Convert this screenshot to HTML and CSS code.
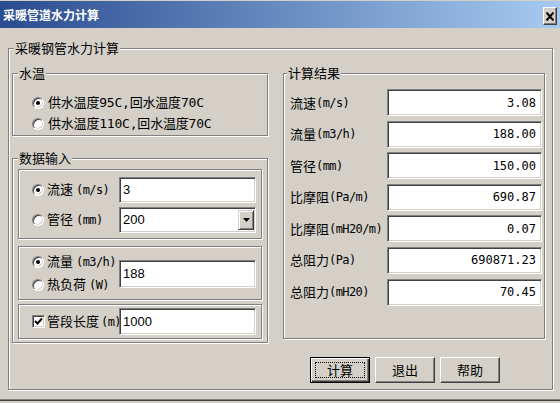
FILE: index.html
```html
<!DOCTYPE html>
<html lang="zh-CN">
<head>
<meta charset="utf-8">
<title>采暖管道水力计算</title>
<link rel="stylesheet" href="styles.css">
</head>
<body>
<div class="window">
  <div class="titlebar">
    <span class="title">采暖管道水力计算</span>
    <span class="close"><svg width="8" height="9" viewBox="0 0 8 9"><path d="M0.5 0.5 L7.5 8.5 M7.5 0.5 L0.5 8.5" stroke="#000" stroke-width="2" fill="none"/></svg></span>
  </div>
  <fieldset class="group outer">
    <legend>采暖钢管水力计算</legend>
    <div class="outer-body">
      <div class="columns">
        <div class="leftcol">
          <fieldset class="group temp">
            <legend>水温</legend>
            <div class="temp-body">
              <div class="opt"><span class="radio on"></span>供水温度95C,回水温度70C</div>
              <div class="opt"><span class="radio"></span>供水温度110C,回水温度70C</div>
            </div>
          </fieldset>
          <fieldset class="group datain">
            <legend>数据输入</legend>
            <div class="datain-body">
              <div class="box box1">
                <div class="opt lbl"><span class="radio on"></span>流速<span class="a">(m/s)</span></div>
                <div class="field"><span>3</span></div>
                <div class="opt lbl"><span class="radio"></span>管径<span class="a">(mm)</span></div>
                <div class="field combo"><span>200</span><span class="drop"><svg width="7" height="4" viewBox="0 0 7 4"><polygon points="0,0 7,0 3.5,4" fill="#000"/></svg></span></div>
              </div>
              <div class="box box2">
                <div class="opt lbl r1"><span class="radio on"></span>流量<span class="a">(m3/h)</span></div>
                <div class="opt lbl r2"><span class="radio"></span>热负荷<span class="a">(W)</span></div>
                <div class="field tall"><span>188</span></div>
              </div>
              <div class="box box3">
                <div class="opt lbl chk"><span class="check"><svg width="9" height="9" viewBox="0 0 9 9"><polyline points="1,4 3.5,6.5 8,1.5" stroke="#000" stroke-width="2" fill="none"/></svg></span>管段长度<span class="a">(m)</span></div>
                <div class="field"><span>1000</span></div>
              </div>
            </div>
          </fieldset>
        </div>
        <fieldset class="group result">
          <legend>计算结果</legend>
          <div class="result-body">
            <div class="rlabel">流速<span class="a">(m/s)</span></div>
            <div class="field val">3.08</div>
            <div class="rlabel">流量<span class="a">(m3/h)</span></div>
            <div class="field val">188.00</div>
            <div class="rlabel">管径<span class="a">(mm)</span></div>
            <div class="field val">150.00</div>
            <div class="rlabel">比摩阻<span class="a">(Pa/m)</span></div>
            <div class="field val">690.87</div>
            <div class="rlabel">比摩阻<span class="a">(mH20/m)</span></div>
            <div class="field val">0.07</div>
            <div class="rlabel">总阻力<span class="a">(Pa)</span></div>
            <div class="field val">690871.23</div>
            <div class="rlabel">总阻力<span class="a">(mH20)</span></div>
            <div class="field val">70.45</div>
          </div>
        </fieldset>
      </div>
      <div class="buttons">
        <div class="btn default"><span>计算</span></div>
        <div class="btn"><span>退出</span></div>
        <div class="btn"><span>帮助</span></div>
      </div>
    </div>
  </fieldset>
</div>
</body>
</html>
```
FILE: styles.css
```css
* { box-sizing: border-box; }
html, body { margin: 0; padding: 0; }
body {
  width: 560px;
  height: 403px;
  overflow: hidden;
  background: #d4d0c8;
  font-family: "Noto Sans CJK SC", sans-serif;
  font-size: 13px;
  color: #000;
}
.window {
  height: 400px;
  padding-top: 1px;
  border-bottom: 1px solid #808080;
  box-shadow: 0 1px 0 #404040;
}
.titlebar {
  height: 27px;
  display: flex;
  align-items: center;
  justify-content: space-between;
  padding: 0 3px;
  background: linear-gradient(to right, #2a4c90, #a6caf0);
}
.title {
  color: #fff;
  font-weight: bold;
  font-size: 12px;
  line-height: 16px;
}
.close {
  width: 14px;
  height: 18px;
  margin-top: 3px;
  background: #d4d0c8;
  border: 1px solid;
  border-color: #fff #404040 #404040 #fff;
  box-shadow: inset -1px -1px 0 #808080;
  display: flex;
  align-items: center;
  justify-content: center;
}
.close svg { display: block; }

.group {
  margin: 0;
  padding: 0;
  min-width: 0;
  border: 1px solid #808080;
  box-shadow: inset 1px 1px 0 #fff, 1px 1px 0 #fff;
}
.group > legend {
  padding: 0 1px;
  margin-left: 5px;
  font-size: 13px;
  line-height: 18px;
  background: #d4d0c8;
}
.outer {
  margin: 11px 0 0 8px;
  width: 545px;
}
.outer-body { padding: 7px 7px 6px 3px; }
.columns {
  display: flex;
  align-items: flex-start;
  gap: 15px;
}
.leftcol {
  width: 256px;
  display: flex;
  flex-direction: column;
  gap: 13px;
}
.temp-body { padding: 10px 0 1px 19px; }
.opt {
  display: flex;
  align-items: center;
  gap: 4px;
  height: 21px;
  line-height: 16px;
  white-space: nowrap;
  font-family: "DejaVu Sans Mono", "Noto Sans CJK SC", monospace;
  letter-spacing: -0.2px;
}
.opt.lbl { height: auto; gap: 3px; letter-spacing: 0; }
.opt.chk { gap: 2px; }
.a {
  font-family: "DejaVu Sans Mono", monospace;
  font-size: 12px;
  letter-spacing: -0.6px;
}
.radio {
  position: relative;
  flex: none;
  width: 12px;
  height: 12px;
  border-radius: 50%;
  background: #fff;
  border: 1px solid;
  border-color: #808080 #fff #fff #808080;
  box-shadow: inset 1px 1px 0 #404040, inset -1px -1px 0 #d4d0c8;
}
.radio.on::after {
  content: "";
  position: absolute;
  left: 3px;
  top: 3px;
  width: 4px;
  height: 4px;
  border-radius: 50%;
  background: #000;
}
.check {
  flex: none;
  width: 13px;
  height: 13px;
  background: #fff;
  border: 1px solid;
  border-color: #808080 #fff #fff #808080;
  box-shadow: inset 1px 1px 0 #404040, inset -1px -1px 0 #d4d0c8;
  display: flex;
  align-items: center;
  justify-content: center;
}
.check svg { display: block; }

.datain-body { padding: 2px 5px 3px 5px; }
.box {
  border: 1px solid #808080;
  box-shadow: inset 1px 1px 0 #fff, 1px 1px 0 #fff;
  display: grid;
  grid-template-columns: 87px 137px;
  align-items: center;
}
.box1 {
  padding: 7px 5px 5px 13px;
  grid-auto-rows: 26px;
  row-gap: 4px;
}
.box2 {
  margin-top: 7px;
  padding: 4px 5px 3px 13px;
  grid-template-rows: 22px 22px;
  row-gap: 1px;
}
.box2 .r1 { grid-column: 1; grid-row: 1; }
.box2 .r2 { grid-column: 1; grid-row: 2; }
.box2 .tall { grid-column: 2; grid-row: 1 / span 2; height: 28px; }
.box3 {
  margin-top: 4px;
  padding: 3px 5px 3px 13px;
  grid-auto-rows: 27px;
}

.field {
  height: 100%;
  background: #fff;
  border: 1px solid;
  border-color: #808080 #fff #fff #808080;
  box-shadow: inset 1px 1px 0 #404040, inset -1px -1px 0 #d4d0c8;
  display: flex;
  align-items: center;
  padding: 0 2px 0 3px;
  font-family: "Liberation Sans", sans-serif;
  font-size: 13px;
  line-height: 16px;
}
.combo { justify-content: space-between; padding: 2px 1px 2px 3px; align-items: stretch; }
.combo > span:first-child { display: flex; align-items: center; }
.drop {
  width: 16px;
  background: #d4d0c8;
  border: 1px solid;
  border-color: #d4d0c8 #404040 #404040 #d4d0c8;
  box-shadow: inset 1px 1px 0 #fff, inset -1px -1px 0 #808080;
  display: flex;
  align-items: center;
  justify-content: center;
}
.drop svg { display: block; }

.result { width: 262px; }
.result > legend { margin-left: 3px; }
.result-body {
  padding: 7px 2px 32px 6px;
  display: grid;
  grid-template-columns: 97px 155px;
  grid-auto-rows: 27px;
  row-gap: 4.6px;
  align-items: center;
}
.rlabel {
  display: flex;
  align-items: center;
  line-height: 16px;
  white-space: nowrap;
}
.val {
  justify-content: flex-end;
  padding-right: 5px;
  font-family: "DejaVu Sans Mono", monospace;
  font-size: 12px;
}

.buttons {
  display: flex;
  gap: 5px;
  margin: 14px 0 0 298px;
}
.btn {
  position: relative;
  width: 60px;
  height: 26px;
  background: #d4d0c8;
  border: 1px solid;
  border-color: #fff #404040 #404040 #fff;
  box-shadow: inset -1px -1px 0 #808080;
  display: flex;
  align-items: center;
  justify-content: center;
  font-size: 13px;
  line-height: 16px;
}
.btn.default {
  border: 1px solid #000;
  box-shadow: inset 1px 1px 0 #fff, inset -1px -1px 0 #404040, inset -2px -2px 0 #808080;
}
.btn.default::after {
  content: "";
  position: absolute;
  left: 4px;
  top: 4px;
  right: 4px;
  bottom: 4px;
  border: 1px dotted #000;
}
```
